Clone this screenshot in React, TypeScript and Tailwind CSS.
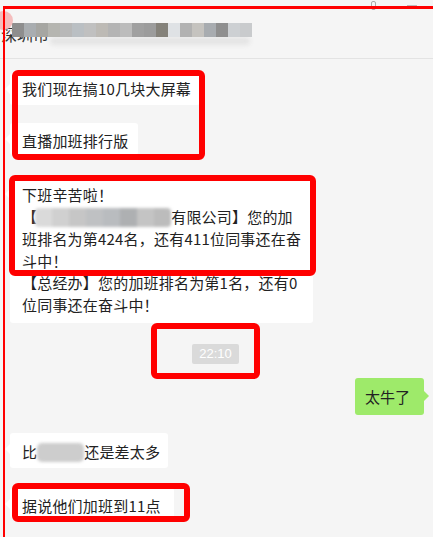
import React from "react";

const mosaic = [
  "#8e8e8e", "#a9adb0", "#a6a6a2", "#b5b5b0", "#b8b8b8", "#babfc3", "#c0c0c0", "#bdbab5",
  "#b4b4b4", "#bcbcbc", "#a0a0a0", "#9c9c9c", "#85827a", "#dfe2e5", "#b2b2b2", "#c5c3bf",
  "#a8acb0", "#8f8f8f", "#cdd0d3", "#c9cbcd",
];

const blurC = ["#dadada", "#d0d0d0", "#c6c6c6", "#bfc1c3", "#b9bcbf", "#aeb0b2", "#c4c4c4", "#bcbcbc"];

function LeftBubble({ className, children }: { className: string; children: React.ReactNode }) {
  return (
    <div className={"relative bg-white rounded-[3px] pl-[12px] text-[15px] leading-[22px] tracking-[0.2px] whitespace-nowrap " + className}>
      <span className="absolute left-[-5px] top-[11px] w-0 h-0 border-y-[5px] border-y-transparent border-r-[5px] border-r-white" />
      {children}
    </div>
  );
}

export default function App() {
  return (
    <div className="relative w-[433px] h-[537px] overflow-hidden bg-[#f5f5f5] text-[#222] font-['Noto_Sans_CJK_SC','Noto_Sans',sans-serif]">
      {/* header */}
      <div className="relative h-[59px] border-b border-[#e3e3e3] overflow-hidden">
        <div className="pt-[23px] pl-[1px] text-[16px] leading-[22px] text-[#333] whitespace-nowrap">深圳市</div>
        <div className="absolute left-[50px] top-[37px] w-[200px] h-[8px] rounded-full bg-[#e4e4e4] blur-[2px]" />
        <div className="absolute left-[12px] top-[23px] flex h-[14px]">
          {mosaic.map((c, i) => (
            <div key={i} className="w-[12px] h-[14px]" style={{ backgroundColor: c }} />
          ))}
        </div>
        <div className="absolute left-[-6px] top-[11px] w-[19px] h-[19px] rounded-full bg-[#f4b8b8] opacity-90" />
        <div className="absolute left-[371px] top-[1px] w-[5px] h-[9px] rounded-[2px] border border-[#aaa]" />
        <div className="absolute left-[407px] top-[5px] w-[10px] h-[1px] bg-[#bbb]" />
      </div>

      {/* messages */}
      <div className="flex flex-col items-start pl-[10px]">
        <LeftBubble className="mt-[14px] w-[190px] h-[32px] pt-[5px]">我们现在搞10几块大屏幕</LeftBubble>
        <LeftBubble className="mt-[18px] w-[128px] h-[32px] pt-[7px]">直播加班排行版</LeftBubble>
        <LeftBubble className="mt-[23px] w-[303px] pt-[6px] pb-[7px]">
          <div>下班辛苦啦！</div>
          <div className="flex items-center">
            <span>【</span>
            <span className="flex h-[19px] w-[136px] ml-[-2px] overflow-hidden rounded-[4px] blur-[1.5px]">
              {blurC.map((c, i) => (
                <span key={i} className="flex-1 h-full" style={{ backgroundColor: c }} />
              ))}
            </span>
            <span>有限公司】您的加</span>
          </div>
          <div>班排名为第424名，还有411位同事还在奋</div>
          <div>斗中！</div>
          <div>【总经办】您的加班排名为第1名，还有0</div>
          <div>位同事还在奋斗中！</div>
        </LeftBubble>

        <div className="mt-[21px] ml-[182px] h-[20px] w-[47px] rounded-[2px] bg-[#dadada] text-white text-[13px] leading-[20px] text-center font-['Liberation_Sans',sans-serif]">
          22:10
        </div>

        <div className="relative self-end mr-[9px] mt-[14px] h-[37px] w-[69px] rounded-[3px] bg-[#9eea6a] pl-[10px] pt-[8px] text-[15px] leading-[22px]">
          <span className="absolute right-[-5px] top-[13px] w-0 h-0 border-y-[5px] border-y-transparent border-l-[5px] border-l-[#9eea6a]" />
          太牛了
        </div>

        <LeftBubble className="mt-[18px] w-[158px] h-[35px] pt-[8px]">
          <div className="flex items-center">
            <span>比</span>
            <span className="h-[19px] w-[47px] rounded-[5px] bg-[#cdcdcd] blur-[1.5px]" />
            <span>还是差太多</span>
          </div>
        </LeftBubble>

        <LeftBubble className="mt-[20px] w-[164px] h-[30px] pt-[7px]">据说他们加班到11点</LeftBubble>
      </div>

      {/* annotation frame */}
      <div className="absolute left-[3px] top-[6px] bottom-0 w-[2px] bg-[#ff0000]" />
      <div className="absolute left-[3px] top-[6px] right-0 h-[3px] bg-[#ff0000]" />

      {/* red highlight boxes */}
      <div className="absolute left-[12px] top-[70px] w-[193px] h-[90px] border-[6px] border-[#ff0000] rounded-[6px]" />
      <div className="absolute left-[9px] top-[175px] w-[307px] h-[101px] border-[6px] border-[#ff0000] rounded-[6px]" />
      <div className="absolute left-[151px] top-[323px] w-[109px] h-[56px] border-[6px] border-[#ff0000] rounded-[6px]" />
      <div className="absolute left-[12px] top-[483px] w-[178px] h-[39px] border-[6px] border-[#ff0000] rounded-[6px]" />
    </div>
  );
}
